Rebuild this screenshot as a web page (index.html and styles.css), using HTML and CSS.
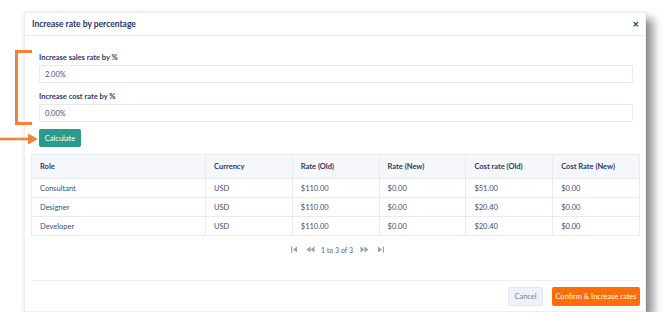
FILE: index.html
```html
<!DOCTYPE html>
<html lang="en">
<head>
    <meta charset="UTF-8">
    <title>Increase rate by percentage</title>
    <link rel="stylesheet" href="styles.css">
</head>
<body>
    <div class="modal">
        <div class="modal-header">
            <h2>Increase rate by percentage</h2>
            <span class="close">&times;</span>
        </div>

        <div class="form">
            <label>Increase sales rate by %</label>
            <div class="input">2.00%</div>
            <label>Increase cost rate by %</label>
            <div class="input">0.00%</div>
            <button class="calc">Calculate</button>
        </div>

        <div class="table-wrap">
            <table>
                <colgroup>
                    <col class="c-role">
                    <col><col><col><col><col>
                </colgroup>
                <thead>
                    <tr>
                        <th>Role</th>
                        <th>Currency</th>
                        <th>Rate (Old)</th>
                        <th>Rate (New)</th>
                        <th>Cost rate (Old)</th>
                        <th>Cost Rate (New)</th>
                    </tr>
                </thead>
                <tbody>
                    <tr><td>Consultant</td><td>USD</td><td>$110.00</td><td>$0.00</td><td>$51.00</td><td>$0.00</td></tr>
                    <tr><td>Designer</td><td>USD</td><td>$110.00</td><td>$0.00</td><td>$20.40</td><td>$0.00</td></tr>
                    <tr><td>Developer</td><td>USD</td><td>$110.00</td><td>$0.00</td><td>$20.40</td><td>$0.00</td></tr>
                </tbody>
            </table>

            <div class="pager">
                <svg width="8" height="7" viewBox="0 0 8 7"><rect x="1" y="0.5" width="1.2" height="6" fill="#9aa0b4"/><path d="M7 0.5 L3 3.5 L7 6.5 Z" fill="#9aa0b4"/></svg>
                <svg class="gap" width="9" height="7" viewBox="0 0 9 7"><path d="M4.5 0.5 L0.5 3.5 L4.5 6.5 Z M8.5 0.5 L4.5 3.5 L8.5 6.5 Z" fill="#9aa0b4"/></svg>
                <span class="pages">1 to 3 of 3</span>
                <svg class="gap" width="9" height="7" viewBox="0 0 9 7"><path d="M0.5 0.5 L4.5 3.5 L0.5 6.5 Z M4.5 0.5 L8.5 3.5 L4.5 6.5 Z" fill="#9aa0b4"/></svg>
                <svg class="gap" width="8" height="7" viewBox="0 0 8 7"><path d="M1 0.5 L5 3.5 L1 6.5 Z" fill="#9aa0b4"/><rect x="5.8" y="0.5" width="1.2" height="6" fill="#9aa0b4"/></svg>
            </div>

            <div class="modal-footer">
                <button class="cancel">Cancel</button>
                <button class="confirm">Confirm &amp; Increase rates</button>
            </div>
        </div>
    </div>

    <!-- annotation marks drawn over the screenshot -->
    <div class="bracket"></div>
    <svg class="arrow" width="40" height="12" viewBox="0 0 40 12">
        <line x1="0" y1="6" x2="30" y2="6" stroke="#f08336" stroke-width="2.6"/>
        <path d="M28 0.5 L38 6 L28 11.5 Z" fill="#f08336"/>
    </svg>
</body>
</html>
```

FILE: styles.css
```css
body {
    margin: 0;
    background-color: #ffffff;
    font-family: "Lato", "Liberation Sans", sans-serif;
    color: #3b4268;
}

.modal {
    margin: 12px 0 0 24px;
    width: 622px;
    height: 300px;
    background-color: #ffffff;
    border: 1px solid #eceef3;
    box-sizing: border-box;
    box-shadow: 7px 7px 9px rgba(0, 0, 0, 0.45), 0 0 3px rgba(0, 0, 0, 0.08);
}

.modal-header {
    height: 22px;
    display: flex;
    align-items: center;
    justify-content: space-between;
    padding: 0 6px 0 7px;
    border-bottom: 1px solid #eaedf4;
}

.modal-header h2 {
    margin: 0;
    font-size: 8.5px;
    font-weight: 700;
    color: #2c3363;
}

.close {
    font-size: 11px;
    font-weight: 700;
    color: #2c3363;
    line-height: 1;
    margin-top: -2px;
}

.form {
    display: flex;
    flex-direction: column;
    align-items: flex-start;
    padding: 17px 12px 0 14px;
}

.form label {
    font-size: 7.5px;
    font-weight: 700;
    color: #2f3665;
    margin-bottom: 3px;
}

.input {
    width: 100%;
    height: 18px;
    box-sizing: border-box;
    border: 1px solid #e6e9f0;
    border-radius: 2px;
    font-size: 7.5px;
    color: #4a5075;
    padding-left: 5px;
    display: flex;
    align-items: center;
    margin-bottom: 9px;
}

.calc {
    margin-top: -2px;
    height: 18px;
    width: 42px;
    border: none;
    border-radius: 2px;
    background-color: #2a9d8a;
    color: #ffffff;
    font-family: inherit;
    font-size: 7.5px;
    padding: 0;
}

.table-wrap {
    padding: 7px 5px 0 6px;
}

table {
    width: 609px;
    table-layout: fixed;
    border-collapse: collapse;
    font-size: 7.5px;
    color: #444b72;
}

.c-role {
    width: 174px;
}

th, td {
    border: 1px solid #e8ebf2;
    text-align: left;
    padding: 0 0 0 8px;
}

th {
    height: 23px;
    background-color: #f5f7fb;
    font-weight: 700;
    color: #2f3665;
}

td {
    height: 18px;
}

.pager {
    display: flex;
    align-items: center;
    justify-content: center;
    height: 27px;
    padding-left: 4px;
    color: #5b6180;
    font-size: 7px;
}

.pager .gap {
    margin-left: 8px;
}

.pages {
    margin-left: 6px;
    margin-right: -1px;
}

.modal-footer {
    margin-top: 17px;
    border-top: 1px solid #eef0f5;
    display: flex;
    justify-content: flex-end;
    gap: 9px;
    padding-top: 6px;
}

.modal-footer button {
    height: 19px;
    border-radius: 2px;
    font-family: inherit;
    font-size: 7.5px;
    padding: 0;
}

.cancel {
    width: 35px;
    background-color: #eef1f7;
    border: 1px solid #e3e7ef;
    color: #7b829c;
}

.confirm {
    width: 88px;
    background-color: #ff6d0a;
    border: none;
    color: #ffffff;
}

.bracket {
    position: absolute;
    left: 15px;
    top: 50px;
    width: 14px;
    height: 69px;
    border: 3px solid #f08336;
    border-right: none;
}

.arrow {
    position: absolute;
    left: 0;
    top: 133px;
}
```
